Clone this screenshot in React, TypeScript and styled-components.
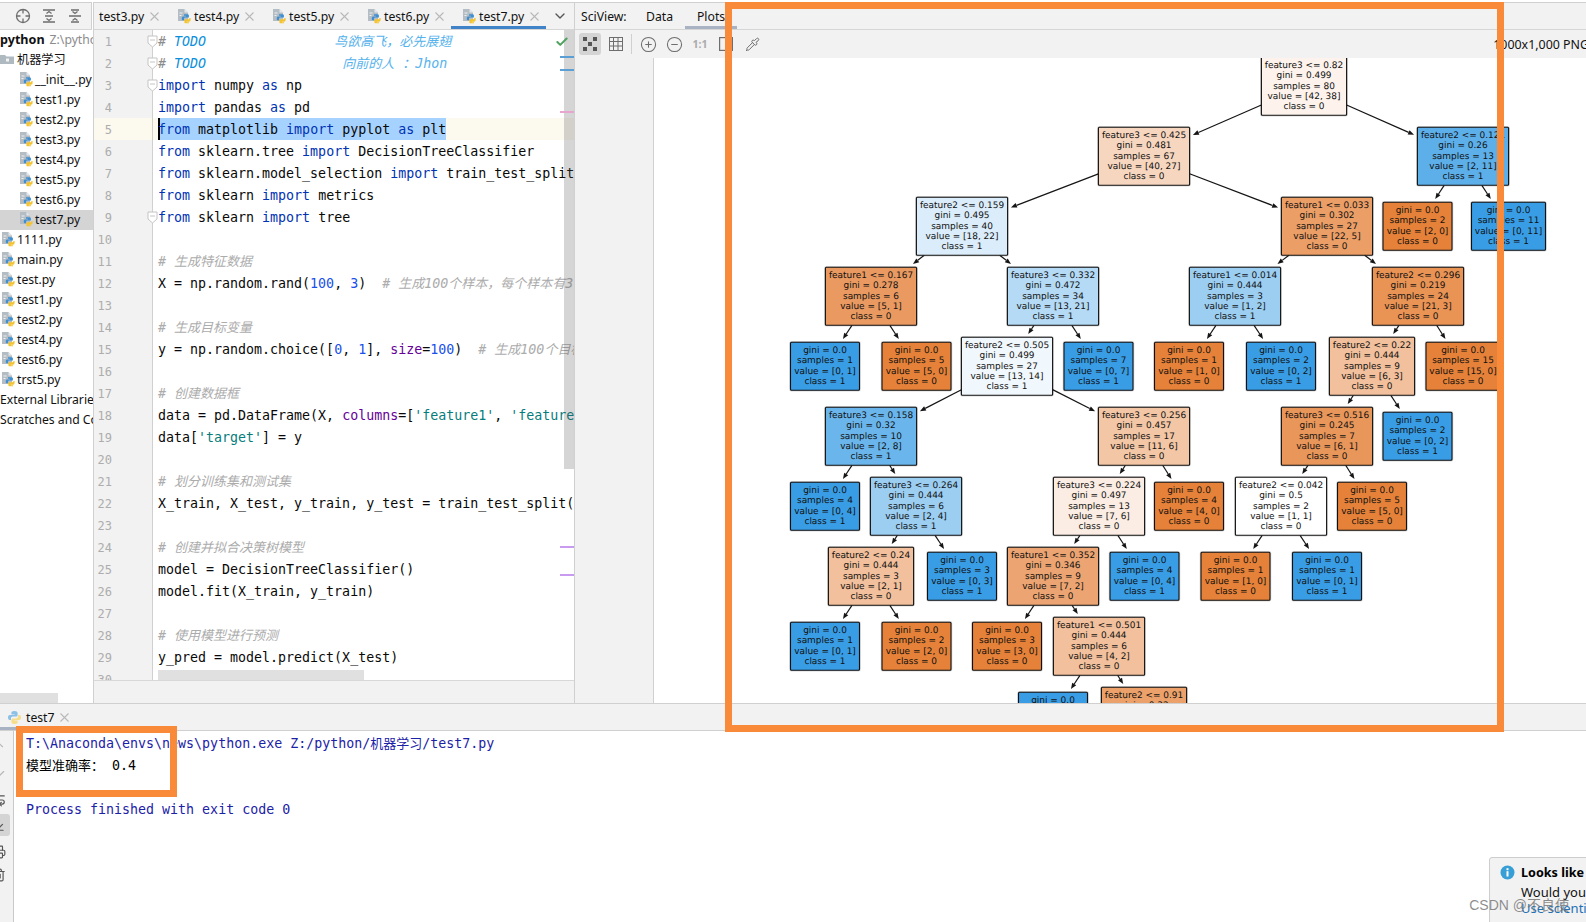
import React from "react";
import styled, { createGlobalStyle } from "styled-components";
import { ArrowDownToLine, Check, ChevronDown, ChevronUp, CircleMinus, CirclePlus, Pipette, Printer, Trash2, WrapText } from "lucide-react";

const Global = createGlobalStyle`
  html, body { margin: 0; padding: 0; background: #fff; }
  body { font-family: "Noto Sans", "Noto Sans CJK SC", sans-serif; }
`;

const UI = `"Noto Sans", "Noto Sans CJK SC", sans-serif`;
const MONO = `"DejaVu Sans Mono", "Noto Sans CJK SC", monospace`;

const Page = styled.div`
  position: relative; width: 1586px; height: 922px; overflow: hidden;
  display: flex; flex-direction: column; background: #fff; font: 12.2px ${UI}; color: #111;
`;
const Upper = styled.div`
  height: 704px; flex: none; display: flex; padding-top: 2px; box-sizing: border-box; border-bottom: 1px solid #d0d0d0;
`;
const ProjectPane = styled.aside`
  position: relative; width: 94px; flex: none; display: flex; flex-direction: column; border-right: 1px solid #d0d0d0; box-sizing: border-box;
`;
const TopBar = styled.div`
  height: 28px; flex: none; box-sizing: border-box; display: flex; align-items: center;
  background: #f2f2f2; border-top: 1px solid #d0d0d0; border-bottom: 1px solid #d6d6d6;
`;
const ProjectTools = styled(TopBar)`
  gap: 10px; padding-left: 15px; color: #6e6e6e; position: relative;
  border-right: 1px solid #d0d0d0; margin-right: 1px;
`;
const ProjectTree = styled.div`
  flex: 1; display: flex; flex-direction: column; overflow: hidden; background: #fff;
`;
const TreeRow = styled.div<{ $indent: number; $selected?: boolean }>`
  height: 20px; flex: none; box-sizing: border-box; display: flex; align-items: center; gap: 2px; white-space: nowrap; overflow: hidden;
  padding: 0 0 2px ${(p) => p.$indent}px; background: ${(p) => (p.$selected ? "#d4d4d4" : "transparent")};
`;
const ProjectName = styled.b`
  font-weight: 700; font-size: 12.6px; margin-right: 3px;
`;
const ProjectPath = styled.span`
  color: #8c8c8c;
`;
const HScroll = styled.div<{ $left: number; $width: number }>`
  position: absolute; left: ${(p) => p.$left}px; bottom: 0; width: ${(p) => p.$width}px; height: 10px; background: #e0e0e0;
`;

const EditorPane = styled.section`
  width: 481px; flex: none; display: flex; flex-direction: column; border-right: 1px solid #d0d0d0; box-sizing: border-box;
`;
const TabStrip = styled(TopBar)`
  align-items: stretch; position: relative;
`;
const Tab = styled.div<{ $active?: boolean; $first?: boolean }>`
  width: ${(p) => (p.$first ? 72 : 95)}px; flex: none; box-sizing: border-box; display: flex; align-items: center; gap: 3px;
  padding-left: ${(p) => (p.$first ? 5 : 11)}px; white-space: nowrap; position: relative;
  box-shadow: ${(p) => (p.$active ? "inset 0 -3px 0 #4083c9" : "none")};
`;
const TabLabel = styled.span`
  width: 46px;
`;
const TabClose = styled.svg`
  width: 9px; height: 9px; margin-left: 2px; stroke: #b9b9b9; stroke-width: 1.1; fill: none;
`;
const TabMenu = styled.div`
  margin-left: 6px; display: flex; align-items: center; color: #555;
`;
const EditorBody = styled.div`
  position: relative; height: 650px; flex: none; overflow: hidden; display: flex; flex-direction: column;
`;
const CodeRow = styled.div<{ $current?: boolean }>`
  position: relative; height: 22px; flex: none; display: flex; background: ${(p) => (p.$current ? "#fcf9ee" : "#fff")};
`;
const LineNo = styled.div<{ $current?: boolean }>`
  width: 59px; flex: none; box-sizing: border-box; padding-right: 40px; text-align: right;
  background: ${(p) => (p.$current ? "#fcf9ee" : "#f2f2f2")}; border-right: 1px solid #d0d0d0;
  color: #adadad; font: 12px/24px ${MONO};
`;
const Fold = styled.svg`
  position: absolute; left: 53px; top: 5px; width: 11px; height: 13px; fill: #fff; stroke: #c4c4c4; stroke-width: 1;
`;
const Code = styled.div`
  flex: 1; padding-left: 5px; min-width: 0; overflow: hidden; white-space: pre; color: #080808; font: 13.3px/24px ${MONO};
`;
const Kw = styled.span`color: #0033b3;`;
const Num = styled.span`color: #1750eb;`;
const Str = styled.span`color: #067d7d;`;
const Arg = styled.span`color: #660099;`;
const Cmt = styled.span`color: #acacac; font-style: italic;`;
const Todo = styled.span`color: #0a8fdc; font-style: italic;`;
const TodoHash = styled.span`color: #8c8c8c; font-style: italic;`;
const TodoText = styled.span`color: #55b2ec; font-style: italic;`;
const Cn = styled.span`font-size: 13px;`;
const Sel = styled.span`
  display: inline-block; vertical-align: top; height: 22px; background: #a6d2ff; box-shadow: inset 2px 0 0 #000;
`;
const OkMark = styled.div`
  position: absolute; left: 461px; top: 5px; color: #4ea25e; display: flex;
`;
const ScrollThumb = styled.div`
  position: absolute; right: 0; top: 0; width: 10px; height: 439px; background: rgba(80, 80, 80, 0.24);
`;
const Stripe = styled.div<{ $top: number; $color: string }>`
  position: absolute; right: 0; width: 14px; height: 2px; top: ${(p) => p.$top}px; background: ${(p) => p.$color};
`;
const CodeScroll = styled.div`
  position: absolute; left: 64px; top: 640px; width: 206px; height: 10px; background: #e0e0e0;
`;
const EditorFoot = styled.div`
  flex: 1; background: #f2f2f2; border-top: 1px solid #d8d8d8;
`;

const SciPane = styled.section`
  flex: 1; min-width: 0; display: flex; flex-direction: column;
`;
const SciTabs = styled(TopBar)`
  align-items: stretch; white-space: nowrap;
`;
const SciTitle = styled.div`
  display: flex; align-items: center; padding-left: 6px; box-sizing: border-box; width: 59px; flex: none;
`;
const SciTab = styled.div<{ $active?: boolean; $width: number }>`
  display: flex; align-items: center; padding-left: 12px; box-sizing: border-box; width: ${(p) => p.$width}px; flex: none;
  box-shadow: ${(p) => (p.$active ? "inset 0 -3px 0 #a9b2c2" : "none")};
`;
const SciToolbar = styled.div`
  height: 28px; flex: none; display: flex; align-items: center; background: #f2f2f2; color: #6e6e6e; padding-left: 4px;
`;
const ToolBtn = styled.div<{ $active?: boolean; $width?: number }>`
  width: ${(p) => p.$width ?? 22}px; height: 22px; flex: none; display: flex; align-items: center; justify-content: center;
  border-radius: 3px; background: ${(p) => (p.$active ? "#d4d4d4" : "transparent")}; margin-right: 4px;
`;
const ToolSep = styled.div`
  width: 1px; height: 20px; background: #d0d0d0; margin: 0 5px 0 0;
`;
const Ratio = styled.span`
  font-size: 10.5px; font-weight: 700; color: #ababab;
`;
const ImageInfo = styled.div`
  margin-left: auto; margin-right: -3px; font-size: 12.4px; color: #111; white-space: nowrap;
`;
const SciBody = styled.div`
  flex: 1; min-height: 0; display: flex;
`;
const ThumbRail = styled.div`
  width: 78px; flex: none; background: #f2f2f2; border-right: 1px solid #d0d0d0;
`;
const Plot = styled.div`
  flex: 1; min-width: 0; background: #fff; overflow: hidden;
`;
const TreeSvg = styled.svg`
  display: block; width: 932px; height: 646px;
`;
const NodeText = styled.text`
  font: 8.95px "DejaVu Sans", sans-serif; fill: #111; text-anchor: middle; text-rendering: geometricPrecision;
`;

const RunWindow = styled.section`
  position: relative; flex: 1; min-height: 0; display: flex; flex-direction: column;
`;
const RunTabs = styled.div`
  height: 27px; flex: none; display: flex; box-sizing: border-box; background: #f2f2f2; border-bottom: 1px solid #d0d0d0;
`;
const RunTab = styled.div`
  width: 76px; display: flex; align-items: center; gap: 4px; padding-left: 7px; box-sizing: border-box;
  box-shadow: inset 0 -3px 0 #a9b2c2;
`;
const RunBody = styled.div`
  flex: 1; min-height: 0; display: flex;
`;
const RunRail = styled.div`
  width: 14px; flex: none; box-sizing: border-box; display: flex; flex-direction: column; overflow: hidden;
  background: #f2f2f2; border-right: 1px solid #c9c9c9; padding-top: 3px; color: #6e6e6e;
`;
const RailSlot = styled.div<{ $top: number; $on?: boolean; $faint?: boolean }>`
  width: 10px; height: 22px; flex: none; margin-top: ${(p) => p.$top}px; display: flex; align-items: center; overflow: hidden;
  border-radius: 0 3px 3px 0; background: ${(p) => (p.$on ? "#d4d4d4" : "transparent")};
  color: ${(p) => (p.$faint ? "#b8b8b8" : "#555")};
  & > svg { margin-left: -8px; flex: none; }
`;
const Console = styled.div`
  flex: 1; padding: 2px 0 0 12px; font: 13.3px/22px ${MONO};
`;
const ConsoleLine = styled.div<{ $kind: "sys" | "out" }>`
  height: 22px; white-space: pre; color: ${(p) => (p.$kind === "sys" ? "#1c22a8" : "#000")};
`;
const Notice = styled.div`
  position: absolute; left: 1489px; top: 153px; width: 110px; height: 80px; box-sizing: border-box;
  background: #f2f2f2; border: 1px solid #cdcdcd; border-radius: 3px 0 0 0; padding: 5px 0 0 10px;
  display: grid; grid-template-columns: 14px 1fr; column-gap: 7px; align-content: start; white-space: nowrap; font-size: 13px;
`;
const NoticeIcon = styled.svg`
  width: 15px; height: 15px; margin-top: 2px;
`;
const NoticeTitle = styled.b`
  font-weight: 700; line-height: 20px; color: #000; font-size: 12.6px;
`;
const NoticeText = styled.span`
  grid-column: 2; line-height: 19px; color: #111;
`;
const NoticeLink = styled.span`
  grid-column: 2; line-height: 15px; color: #2470b3; margin-top: -1px;
`;
const Watermark = styled.div`
  position: absolute; right: 17px; bottom: 8px; font: 14px "Liberation Sans", "Noto Sans CJK SC", sans-serif;
  color: rgba(110, 110, 110, 0.78); white-space: nowrap; pointer-events: none;
`;
const Callout = styled.div<{ $x: number; $y: number; $w: number; $h: number }>`
  position: absolute; left: ${(p) => p.$x}px; top: ${(p) => p.$y}px; width: ${(p) => p.$w}px; height: ${(p) => p.$h}px;
  box-sizing: border-box; border: 7px solid #f98a3a; pointer-events: none;
`;

const PyFile = () => (
  <svg width="14" height="16" viewBox="0 0 14 16">
    <path d="M1 1h6.5L11 4.5V13H1z" fill="#b4bcc4" />
    <path d="M7.5 1v3.5H11z" fill="#e4e8ec" />
    <path d="M2.5 5h3M2.5 7.5h2" stroke="#eef0f2" strokeWidth="1" />
    <path d="M7 6.2h3.4c1 0 1.5.6 1.5 1.4v1.8H8.4c-1 0-1.4.6-1.4 1.4v1.4H5.6C5 12.2 4.8 11.4 4.8 10.2c0-1.2.6-1.8 1.6-1.8h2.4v-.6H7z" fill="#3f8fd0" />
    <path d="M12.4 9.9h1.2v1.8c0 1.2-.6 2-1.6 2H9.8v.6H12v.9H8.6c-.9 0-1.2-.6-1.2-1.3v-1.4c0-.9.5-1.3 1.4-1.3h2.2c.9 0 1.4-.6 1.4-1.3z" fill="#f4c430" />
  </svg>
);
const PyLogo = () => (
  <svg width="15" height="15" viewBox="0 0 15 15">
    <path d="M7.4 1C4.8 1 4.4 2 4.4 3v1.4h3.2V5H2.8C1.5 5 1 6 1 7.5S1.6 10 2.8 10h1.2V8.4c0-1 .8-1.8 1.8-1.8h3.4c.8 0 1.4-.7 1.4-1.5V3c0-1.2-1.2-2-3.2-2z" fill="#8cc0e6" />
    <path d="M7.6 14c2.6 0 3-1 3-2v-1.4H7.4V10h4.8c1.3 0 1.8-1 1.8-2.5S13.4 5 12.2 5H11v1.6c0 1-.8 1.8-1.8 1.8H5.8c-.8 0-1.4.7-1.4 1.5V12c0 1.2 1.2 2 3.2 2z" fill="#f7dd8a" />
  </svg>
);
const Close = () => (
  <TabClose viewBox="0 0 9 9"><path d="M.5.5l8 8M8.5.5l-8 8" /></TabClose>
);

type N = { x: number; f?: string; g: string; s: number; v: [number, number]; k?: N[] };
const n = (x: number, f: string | undefined, g: string, s: number, v: [number, number], k?: N[]): N => ({ x, f, g, s, v, k });
const leaf = (x: number, s: number, v: [number, number]) => n(x, undefined, "0.0", s, v);

const tree: N = n(1304, "feature3 <= 0.82", "0.499", 80, [42, 38], [
  n(1144, "feature3 <= 0.425", "0.481", 67, [40, 27], [
    n(962, "feature2 <= 0.159", "0.495", 40, [18, 22], [
      n(871, "feature1 <= 0.167", "0.278", 6, [5, 1], [leaf(825, 1, [0, 1]), leaf(916.5, 5, [5, 0])]),
      n(1053, "feature3 <= 0.332", "0.472", 34, [13, 21], [
        n(1007, "feature2 <= 0.505", "0.499", 27, [13, 14], [
          n(871, "feature3 <= 0.158", "0.32", 10, [2, 8], [
            leaf(825, 4, [0, 4]),
            n(916, "feature3 <= 0.264", "0.444", 6, [2, 4], [
              n(871, "feature2 <= 0.24", "0.444", 3, [2, 1], [leaf(825, 1, [0, 1]), leaf(916.5, 2, [2, 0])]),
              leaf(962, 3, [0, 3]),
            ]),
          ]),
          n(1144, "feature3 <= 0.256", "0.457", 17, [11, 6], [
            n(1099, "feature3 <= 0.224", "0.497", 13, [7, 6], [
              n(1053, "feature1 <= 0.352", "0.346", 9, [7, 2], [
                leaf(1007, 3, [3, 0]),
                n(1099, "feature1 <= 0.501", "0.444", 6, [4, 2], [
                  leaf(1053, 1, [0, 1]),
                  n(1144, "feature2 <= 0.91", "0.32", 5, [4, 1]),
                ]),
              ]),
              leaf(1144.5, 4, [0, 4]),
            ]),
            leaf(1189, 4, [4, 0]),
          ]),
        ]),
        leaf(1098.5, 7, [0, 7]),
      ]),
    ]),
    n(1327, "feature1 <= 0.033", "0.302", 27, [22, 5], [
      n(1235, "feature1 <= 0.014", "0.444", 3, [1, 2], [leaf(1189, 1, [1, 0]), leaf(1281, 2, [0, 2])]),
      n(1418, "feature2 <= 0.296", "0.219", 24, [21, 3], [
        n(1372, "feature2 <= 0.22", "0.444", 9, [6, 3], [
          n(1327, "feature3 <= 0.516", "0.245", 7, [6, 1], [
            n(1281, "feature2 <= 0.042", "0.5", 2, [1, 1], [leaf(1235.5, 1, [1, 0]), leaf(1327, 1, [0, 1])]),
            leaf(1372, 5, [5, 0]),
          ]),
          leaf(1417.5, 2, [0, 2]),
        ]),
        leaf(1463, 15, [15, 0]),
      ]),
    ]),
  ]),
  n(1463, "feature2 <= 0.121", "0.26", 13, [2, 11], [leaf(1417.5, 2, [2, 0]), leaf(1508.5, 11, [0, 11])]),
]);

const cy = (d: number) => 86.3 + d * 70;
const halfW = (m: N) => (m.f ? (m.f.length >= 17 ? 45.6 : 42.6) : m.s >= 10 ? 37 : 34.5);
const halfH = (m: N) => (m.f ? 29 : 24);
const fillOf = ([a, b]: [number, number]) => {
  const t = a + b, hi = Math.max(a, b) / t, lo = Math.min(a, b) / t;
  const al = (hi - lo) / (1 - lo);
  const c = a >= b ? [229, 129, 57] : [57, 157, 229];
  return `rgb(${c.map((v) => Math.round(al * v + (1 - al) * 255)).join(",")})`;
};

function Edges({ node, d }: { node: N; d: number }) {
  return (
    <>
      {(node.k ?? []).map((c) => {
        const x0 = node.x, y0 = cy(d), x1 = c.x, y1 = cy(d + 1);
        const dx = x1 - x0, dy = y1 - y0, len = Math.hypot(dx, dy), ux = dx / len, uy = dy / len;
        const tOut = Math.min(halfW(node) / Math.abs(dx), halfH(node) / Math.abs(dy));
        const tIn = Math.min((halfW(c) + 3.3) / Math.abs(dx), (halfH(c) + 3.3) / Math.abs(dy));
        const sx = x0 + dx * tOut, sy = y0 + dy * tOut, ex = x1 - dx * tIn, ey = y1 - dy * tIn;
        const bx = ex - ux * 6, by = ey - uy * 6;
        return (
          <g key={`${c.x}-${d}`}>
            <line x1={sx} y1={sy} x2={bx} y2={by} stroke="#151515" strokeWidth="1.2" />
            <polygon points={`${ex},${ey} ${bx - uy * 2.4},${by + ux * 2.4} ${bx + uy * 2.4},${by - ux * 2.4}`} fill="#151515" />
            <Edges node={c} d={d + 1} />
          </g>
        );
      })}
    </>
  );
}
function Nodes({ node, d }: { node: N; d: number }) {
  const hw = halfW(node), hh = halfH(node), top = cy(d) - hh;
  const lines = [
    ...(node.f ? [node.f] : []),
    `gini = ${node.g}`,
    `samples = ${node.s}`,
    `value = [${node.v[0]}, ${node.v[1]}]`,
    `class = ${node.v[0] >= node.v[1] ? 0 : 1}`,
  ];
  return (
    <>
      <rect x={node.x - hw} y={top} width={hw * 2} height={hh * 2} rx="1" fill="none" stroke="rgba(0,0,0,.16)" strokeWidth="2.6" />
      <rect x={node.x - hw} y={top} width={hw * 2} height={hh * 2} rx="1" fill={fillOf(node.v)} stroke="#111" strokeWidth="1.1" />
      {lines.map((t, i) => (
        <NodeText key={i} x={node.x} y={top + 10.8 + i * 10.3}>{t}</NodeText>
      ))}
      {(node.k ?? []).map((c) => <Nodes key={`${c.x}-${c.s}-${c.v[0]}`} node={c} d={d + 1} />)}
    </>
  );
}

const files = ["__init__.py", "test1.py", "test2.py", "test3.py", "test4.py", "test5.py", "test6.py", "test7.py"];
const rootFiles = ["1111.py", "main.py", "test.py", "test1.py", "test2.py", "test4.py", "test6.py", "trst5.py"];

const lines: React.ReactNode[] = [
  <><TodoHash># </TodoHash><Todo>TODO</Todo><TodoText>{"                "}<Cn>鸟欲高飞，必先展翅</Cn></TodoText></>,
  <><TodoHash># </TodoHash><Todo>TODO</Todo><TodoText>{"                 "}<Cn>向前的人</Cn> <Cn>：</Cn>Jhon</TodoText></>,
  <><Kw>import</Kw> numpy <Kw>as</Kw> np</>,
  <><Kw>import</Kw> pandas <Kw>as</Kw> pd</>,
  <Sel><Kw>from</Kw> matplotlib <Kw>import</Kw> pyplot <Kw>as</Kw> plt</Sel>,
  <><Kw>from</Kw> sklearn.tree <Kw>import</Kw> DecisionTreeClassifier</>,
  <><Kw>from</Kw> sklearn.model_selection <Kw>import</Kw> train_test_split</>,
  <><Kw>from</Kw> sklearn <Kw>import</Kw> metrics</>,
  <><Kw>from</Kw> sklearn <Kw>import</Kw> tree</>,
  "",
  <Cmt># <Cn>生成特征数据</Cn></Cmt>,
  <>X = np.random.rand(<Num>100</Num>, <Num>3</Num>)  <Cmt># <Cn>生成</Cn>100<Cn>个样本，每个样本有</Cn>3个特征</Cmt></>,
  "",
  <Cmt># <Cn>生成目标变量</Cn></Cmt>,
  <>y = np.random.choice([<Num>0</Num>, <Num>1</Num>], <Arg>size</Arg>=<Num>100</Num>)  <Cmt># <Cn>生成</Cn>100<Cn>个目标变量</Cn></Cmt></>,
  "",
  <Cmt># <Cn>创建数据框</Cn></Cmt>,
  <>data = pd.DataFrame(X, <Arg>columns</Arg>=[<Str>'feature1'</Str>, <Str>'feature2'</Str>, <Str>'feature3'</Str>])</>,
  <>data[<Str>'target'</Str>] = y</>,
  "",
  <Cmt># <Cn>划分训练集和测试集</Cn></Cmt>,
  <>X_train, X_test, y_train, y_test = train_test_split(X, y)</>,
  "",
  <Cmt># <Cn>创建并拟合决策树模型</Cn></Cmt>,
  <>model = DecisionTreeClassifier()</>,
  <>model.fit(X_train, y_train)</>,
  "",
  <Cmt># <Cn>使用模型进行预测</Cn></Cmt>,
  <>y_pred = model.predict(X_test)</>,
  "",
];
const folded = new Set([1, 2, 3, 9]);

export default function App() {
  return (
    <Page>
      <Global />
      <Upper>
        <ProjectPane>
          <ProjectTools>
            <svg width="16" height="16" viewBox="0 0 16 16" fill="none" stroke="#6e6e6e" strokeWidth="1.3">
              <circle cx="8" cy="8" r="6.5" /><path d="M8 1.5v4M8 10.5v4M1.5 8h4M10.5 8h4" />
            </svg>
            <svg width="16" height="16" viewBox="0 0 16 16" fill="none" stroke="#6e6e6e" strokeWidth="1.3">
              <path d="M2 2h12M2 14h12M4 8h8M5.5 5.5L8 3.5l2.5 2M5.5 10.5L8 12.5l2.5-2" />
            </svg>
            <svg width="16" height="16" viewBox="0 0 16 16" fill="none" stroke="#6e6e6e" strokeWidth="1.3">
              <path d="M2 8h12M4 14h8M4 2h8M5.5 3.5L8 5.5l2.5-2M5.5 12.5L8 10.5l2.5 2" />
            </svg>
          </ProjectTools>
          <ProjectTree>
            <TreeRow $indent={0}><ProjectName>python</ProjectName><ProjectPath>Z:\python</ProjectPath></TreeRow>
            <TreeRow $indent={0}>
              <svg width="15" height="14" viewBox="0 0 15 14"><path d="M0 3h5l1.5 1.5H14V12H0z" fill="#aeb9c0" /><rect x="6" y="6.5" width="3" height="3" fill="#f2f2f2" /></svg>
              <span>机器学习</span>
            </TreeRow>
            {files.map((f) => (
              <TreeRow key={f} $indent={19} $selected={f === "test7.py"}><PyFile /><span>{f}</span></TreeRow>
            ))}
            {rootFiles.map((f) => (
              <TreeRow key={f} $indent={1}><PyFile /><span>{f}</span></TreeRow>
            ))}
            <TreeRow $indent={0}>External Libraries</TreeRow>
            <TreeRow $indent={0}>Scratches and Consoles</TreeRow>
          </ProjectTree>
          <HScroll $left={0} $width={58} />
        </ProjectPane>

        <EditorPane>
          <TabStrip>
            <Tab $first><TabLabel>test3.py</TabLabel><Close /></Tab>
            <Tab><PyFile /><TabLabel>test4.py</TabLabel><Close /></Tab>
            <Tab><PyFile /><TabLabel>test5.py</TabLabel><Close /></Tab>
            <Tab><PyFile /><TabLabel>test6.py</TabLabel><Close /></Tab>
            <Tab $active><PyFile /><TabLabel>test7.py</TabLabel><Close /></Tab>
            <TabMenu><ChevronDown size={16} /></TabMenu>
          </TabStrip>
          <EditorBody>
            {lines.map((l, i) => (
              <CodeRow key={i} $current={i === 4}>
                <LineNo $current={i === 4}>{i + 1}</LineNo>
                {folded.has(i + 1) && (
                  <Fold viewBox="0 0 11 13"><path d="M1 1h9v7l-4.5 4L1 8z" /><path d="M3 5h5" /></Fold>
                )}
                <Code>{l}</Code>
              </CodeRow>
            ))}
            <ScrollThumb />
            <OkMark><Check size={14} strokeWidth={3.4} /></OkMark>
            <Stripe $top={26} $color="#5b9fd4" />
            <Stripe $top={39} $color="#5b9fd4" />
            <Stripe $top={81} $color="#e6a6cf" />
            <Stripe $top={516} $color="#c99bf0" />
            <Stripe $top={544} $color="#c99bf0" />
            <CodeScroll />
          </EditorBody>
          <EditorFoot />
        </EditorPane>

        <SciPane>
          <SciTabs>
            <SciTitle>SciView:</SciTitle>
            <SciTab $width={51}>Data</SciTab>
            <SciTab $width={52} $active>Plots</SciTab>
          </SciTabs>
          <SciToolbar>
            <ToolBtn $active>
              <svg width="14" height="14" viewBox="0 0 14 14" fill="#555"><rect x="0" y="0" width="4" height="4" /><rect x="10" y="0" width="4" height="4" /><rect x="5" y="5" width="4" height="4" /><rect x="0" y="10" width="4" height="4" /><rect x="10" y="10" width="4" height="4" /></svg>
            </ToolBtn>
            <ToolBtn>
              <svg width="14" height="14" viewBox="0 0 14 14" fill="none" stroke="#6e6e6e"><rect x=".5" y=".5" width="13" height="13" /><path d="M.5 4.5h13M.5 9h13M4.5.5v13M9 .5v13" /></svg>
            </ToolBtn>
            <ToolSep />
            <ToolBtn><CirclePlus size={17} strokeWidth={1.5} /></ToolBtn>
            <ToolBtn><CircleMinus size={17} strokeWidth={1.5} /></ToolBtn>
            <ToolBtn><Ratio>1:1</Ratio></ToolBtn>
            <ToolBtn>
              <svg width="14" height="14" viewBox="0 0 14 14" fill="none" stroke="#6e6e6e" strokeWidth="1.2"><rect x=".6" y=".6" width="12.8" height="12.8" /><path d="M8 4h2.5v2.5" /></svg>
            </ToolBtn>
            <ToolBtn><Pipette size={15} strokeWidth={1.6} /></ToolBtn>
            <ImageInfo>1000x1,000 PNG</ImageInfo>
          </SciToolbar>
          <SciBody>
            <ThumbRail />
            <Plot>
              <TreeSvg viewBox="654 58 932 646">
                <Edges node={tree} d={0} />
                <Nodes node={tree} d={0} />
              </TreeSvg>
            </Plot>
          </SciBody>
        </SciPane>
      </Upper>

      <RunWindow>
        <RunTabs>
          <RunTab><PyLogo /><span>test7</span><Close /></RunTab>
        </RunTabs>
        <RunBody>
          <RunRail>
            <RailSlot $top={0} $faint><ChevronUp size={14} /></RailSlot>
            <RailSlot $top={8} $faint><Check size={14} /></RailSlot>
            <RailSlot $top={3}><WrapText size={14} /></RailSlot>
            <RailSlot $top={3} $on><ArrowDownToLine size={14} /></RailSlot>
            <RailSlot $top={5}><Printer size={14} /></RailSlot>
            <RailSlot $top={1}><Trash2 size={14} /></RailSlot>
          </RunRail>
          <Console>
            <ConsoleLine $kind="sys">T:\Anaconda\envs\news\python.exe Z:/python/<Cn>机器学习</Cn>/test7.py</ConsoleLine>
            <ConsoleLine $kind="out"><Cn>模型准确率：</Cn> 0.4</ConsoleLine>
            <ConsoleLine $kind="out" />
            <ConsoleLine $kind="sys">Process finished with exit code 0</ConsoleLine>
          </Console>
        </RunBody>
        <Notice>
          <NoticeIcon viewBox="0 0 15 15">
            <circle cx="7.5" cy="7.5" r="7" fill="#389fd6" />
            <rect x="6.5" y="6.2" width="2" height="5.3" fill="#fff" /><rect x="6.5" y="3.2" width="2" height="2" fill="#fff" />
          </NoticeIcon>
          <NoticeTitle>Looks like</NoticeTitle>
          <NoticeText>Would you</NoticeText>
          <NoticeLink>Use scientific mode</NoticeLink>
        </Notice>
        <Watermark>CSDN @不良使</Watermark>
      </RunWindow>

      <Callout $x={725} $y={2} $w={779} $h={730} />
      <Callout $x={16} $y={726} $w={161} $h={71} />
    </Page>
  );
}
